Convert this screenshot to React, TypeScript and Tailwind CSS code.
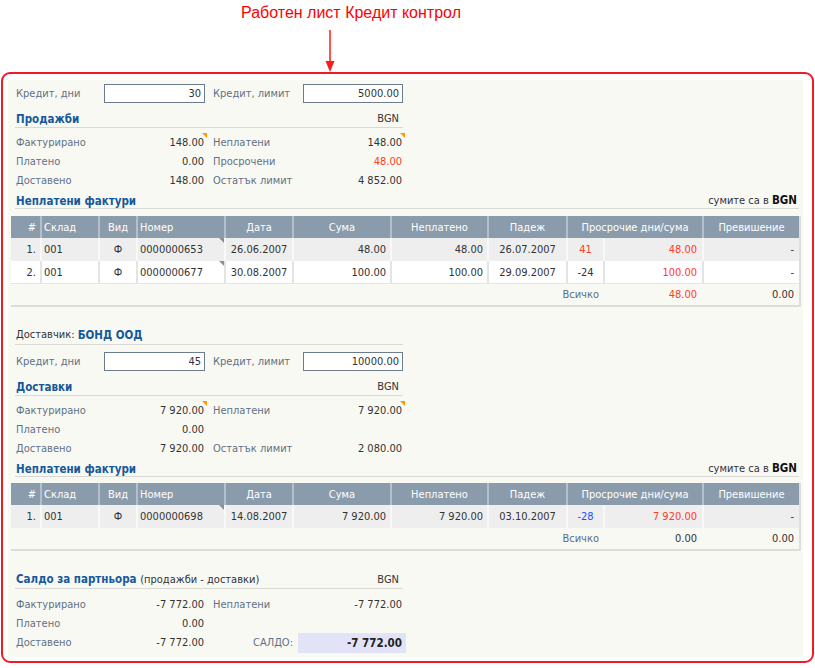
import type { ReactNode } from "react";

const GRID = "grid grid-cols-[29px_58px_38px_88px_68px_98px_97px_79px_37px_99px_97px]";
const FORM = "grid grid-cols-[89px_103px_96px_102px]";

type Entry = { label: string; value: string; red?: boolean; mark?: boolean };

type Invoice = {
  n: string;
  no: string;
  date: string;
  sum: string;
  unpaid: string;
  due: string;
  days: string;
  daysClass: string;
  over: string;
};

function Mark({ gray }: { gray?: boolean }) {
  return (
    <span
      className={`absolute right-0 top-0 h-0 w-0 border-l-[5px] border-t-[5px] border-l-transparent ${
        gray ? "border-t-[#8f8f8f]" : "border-t-[#ff9900]"
      }`}
    />
  );
}

function Value({ e }: { e?: Entry }) {
  return (
    <span
      className={`relative flex items-center justify-end self-stretch whitespace-nowrap pr-[3px] ${
        e?.red ? "text-[#ff3c1f]" : "text-[#333333]"
      }`}
    >
      {e?.value}
      {e?.mark && <Mark />}
    </span>
  );
}

function InfoRow({ left, right }: { left?: Entry; right?: Entry }) {
  return (
    <div className={`${FORM} h-[19px] items-center`}>
      <span className="pl-[1px] text-[#5f7185]">{left?.label}</span>
      <Value e={left} />
      <span className="pl-[6px] text-[#5f7185]">{right?.label}</span>
      <Value e={right} />
    </div>
  );
}

function CreditRow({ days, limit }: { days: string; limit: string }) {
  return (
    <div className={`${FORM} h-[19px] items-center`}>
      <span className="pl-[1px] text-[#5f7185]">Кредит, дни</span>
      <div className="h-[19px] w-[101px] border border-[#6b7c8d] bg-white pr-[3px] text-right leading-[17px] text-[#333333]">
        {days}
      </div>
      <span className="pl-[6px] text-[#5f7185]">Кредит, лимит</span>
      <div className="h-[19px] w-[100px] border border-[#6b7c8d] bg-white pr-[3px] text-right leading-[17px] text-[#333333]">
        {limit}
      </div>
    </div>
  );
}

function Heading({ title, right }: { title: ReactNode; right?: ReactNode }) {
  return (
    <div className="flex h-[25px] w-[388px] items-end justify-between border-b border-[#d9d9d3] pb-[1px] pl-[1px] pr-[4px]">
      <span className="text-[11.5px] font-bold leading-[14px] text-[#15589b]">{title}</span>
      <span className="leading-[14px] text-[#333333]">{right}</span>
    </div>
  );
}

function InvoiceHeading() {
  return (
    <div className="flex h-[19px] w-[784px] items-end justify-between border-b border-[#d9d9d3] pl-[1px] pr-[2px]">
      <span className="text-[11.5px] font-bold leading-[14px] text-[#15589b]">Неплатени фактури</span>
      <span className="leading-[14px] text-[#333333]">
        сумите са в <b className="text-[11.5px] text-[#111111]">BGN</b>
      </span>
    </div>
  );
}

function InvoiceTable({ rows, total, totalRed }: { rows: Invoice[]; total: string; totalRed?: boolean }) {
  const head = "flex items-center border-l-2 border-[#b3bfca]";
  return (
    <div className="w-[790px] border-r-2 border-[#dedede]">
      <div className={`${GRID} h-[22px] bg-[#8a9bac] text-white`}>
        <div className="flex items-center justify-end pr-[4px]">#</div>
        <div className={`${head} pl-[2px]`}>Склад</div>
        <div className={`${head} justify-center`}>Вид</div>
        <div className={`${head} pl-[2px]`}>Номер</div>
        <div className={`${head} justify-center`}>Дата</div>
        <div className={`${head} justify-center`}>Сума</div>
        <div className={`${head} justify-center`}>Неплатено</div>
        <div className={`${head} justify-center`}>Падеж</div>
        <div className={`${head} col-span-2 justify-center`}>Просрочие дни/сума</div>
        <div className={`${head} justify-center`}>Превишение</div>
      </div>
      {rows.map((r, i) => {
        const cell =
          i % 2 === 0
            ? "flex items-center border-l-2 border-[#f8f8f8]"
            : "flex items-center border-l-2 border-[#e4e4e4]";
        return (
          <div
            key={r.no}
            className={`${GRID} h-[23px] whitespace-nowrap text-[#333333] ${
              i % 2 === 0 ? "bg-[#eeeeee]" : "border-b border-[#e6e6e6] bg-white"
            }`}
          >
            <div className="flex items-center justify-end pr-[4px]">{r.n}</div>
            <div className={`${cell} pl-[2px]`}>001</div>
            <div className={`${cell} justify-center`}>Ф</div>
            <div className={`${cell} relative pl-[2px]`}>
              {r.no}
              <Mark gray />
            </div>
            <div className={`${cell} justify-center`}>{r.date}</div>
            <div className={`${cell} justify-end pr-[4px]`}>{r.sum}</div>
            <div className={`${cell} justify-end pr-[4px]`}>{r.unpaid}</div>
            <div className={`${cell} justify-center`}>{r.due}</div>
            <div className={`${cell} justify-center ${r.daysClass}`}>{r.days}</div>
            <div className={`${cell} justify-end pr-[5px] text-[#ff3c1f]`}>{r.sum}</div>
            <div className={`${cell} justify-end pr-[5px]`}>{r.over}</div>
          </div>
        );
      })}
      <div className={`${GRID} h-[23px] border-b-2 border-[#dcdcdc] text-[#333333]`}>
        <div className="col-span-9 flex items-center justify-end pr-[4px] text-[#5a6f87]">Всичко</div>
        <div className={`flex items-center justify-end pr-[5px] ${totalRed ? "text-[#ff3c1f]" : ""}`}>{total}</div>
        <div className="flex items-center justify-end pr-[5px]">0.00</div>
      </div>
    </div>
  );
}

const sales: Invoice[] = [
  {
    n: "1.",
    no: "0000000653",
    date: "26.06.2007",
    sum: "48.00",
    unpaid: "48.00",
    due: "26.07.2007",
    days: "41",
    daysClass: "text-[#ff3c1f]",
    over: "-",
  },
  {
    n: "2.",
    no: "0000000677",
    date: "30.08.2007",
    sum: "100.00",
    unpaid: "100.00",
    due: "29.09.2007",
    days: "-24",
    daysClass: "",
    over: "-",
  },
];

const supplies: Invoice[] = [
  {
    n: "1.",
    no: "0000000698",
    date: "14.08.2007",
    sum: "7 920.00",
    unpaid: "7 920.00",
    due: "03.10.2007",
    days: "-28",
    daysClass: "text-[#1f4fff]",
    over: "-",
  },
];

export default function App() {
  return (
    <div className="h-[668px] w-[815px] bg-white font-['DejaVu_Sans_Condensed','Liberation_Sans',sans-serif] text-[11px] leading-[13px]">
      <div className="h-[30px] pl-[241px] pt-[3px] font-['Liberation_Sans',sans-serif] text-[16px] leading-[20px] text-[#ff0000]">
        Работен лист Кредит контрол
      </div>
      <div className="h-[42px] pl-[325px]">
        <svg width="10" height="42" viewBox="0 0 10 42">
          <line x1="5" y1="0" x2="5" y2="34" stroke="#ff1a1a" strokeWidth="1.5" />
          <polygon points="0.5,31 9.5,31 5,42" fill="#ff1a1a" />
        </svg>
      </div>

      <div className="ml-[1px] w-[813px] rounded-[9px] border-2 border-[#ee1d23] pb-[4px] pl-[5px] pr-[9px] pt-[6px]">
        <div className="bg-[#f9f9f4] px-[3px] pb-[5px] pt-[4px]">
          <div className="ml-[4px]">
            <CreditRow days="30" limit="5000.00" />
            <Heading title="Продажби" right="BGN" />
            <div className="mt-[5px]">
              <InfoRow
                left={{ label: "Фактурирано", value: "148.00", mark: true }}
                right={{ label: "Неплатени", value: "148.00", mark: true }}
              />
              <InfoRow left={{ label: "Платено", value: "0.00" }} right={{ label: "Просрочени", value: "48.00", red: true }} />
              <InfoRow left={{ label: "Доставено", value: "148.00" }} right={{ label: "Остатък лимит", value: "4 852.00" }} />
            </div>
            <InvoiceHeading />
          </div>
          <div className="mt-[7px]">
            <InvoiceTable rows={sales} total="48.00" totalRed />
          </div>

          <div className="ml-[4px] mt-[19px]">
            <div className="flex h-[19px] w-[388px] items-end border-b border-[#d9d9d3] pb-[2px] pl-[1px] leading-[14px] text-[#333333]">
              Доставчик:&nbsp;<b className="text-[11.5px] text-[#15589b]">БОНД ООД</b>
            </div>
            <div className="mt-[7px]">
              <CreditRow days="45" limit="10000.00" />
            </div>
            <Heading title="Доставки" right="BGN" />
            <div className="mt-[5px]">
              <InfoRow
                left={{ label: "Фактурирано", value: "7 920.00", mark: true }}
                right={{ label: "Неплатени", value: "7 920.00", mark: true }}
              />
              <InfoRow left={{ label: "Платено", value: "0.00" }} />
              <InfoRow left={{ label: "Доставено", value: "7 920.00" }} right={{ label: "Остатък лимит", value: "2 080.00" }} />
            </div>
            <InvoiceHeading />
          </div>
          <div className="mt-[6px]">
            <InvoiceTable rows={supplies} total="0.00" />
          </div>

          <div className="ml-[4px] mt-[13px]">
            <Heading
              title={
                <>
                  Салдо за партньора{" "}
                  <span className="text-[11px] font-normal text-[#333333]">(продажби - доставки)</span>
                </>
              }
              right="BGN"
            />
            <div className="mt-[6px]">
              <InfoRow
                left={{ label: "Фактурирано", value: "-7 772.00" }}
                right={{ label: "Неплатени", value: "-7 772.00" }}
              />
              <InfoRow left={{ label: "Платено", value: "0.00" }} />
              <div className="flex h-[19px] items-center">
                <span className="w-[89px] pl-[1px] text-[#5f7185]">Доставено</span>
                <span className="w-[103px] whitespace-nowrap pr-[3px] text-right text-[#333333]">-7 772.00</span>
                <span className="w-[96px] pr-[10px] text-right text-[#5f7185]">САЛДО:</span>
                <div className="-ml-[5px] h-[20px] w-[108px] whitespace-nowrap bg-[#e3e3f7] pr-[4px] text-right text-[11.5px] font-bold leading-[20px] text-[#222222]">
                  -7 772.00
                </div>
              </div>
            </div>
          </div>
        </div>
      </div>
    </div>
  );
}
